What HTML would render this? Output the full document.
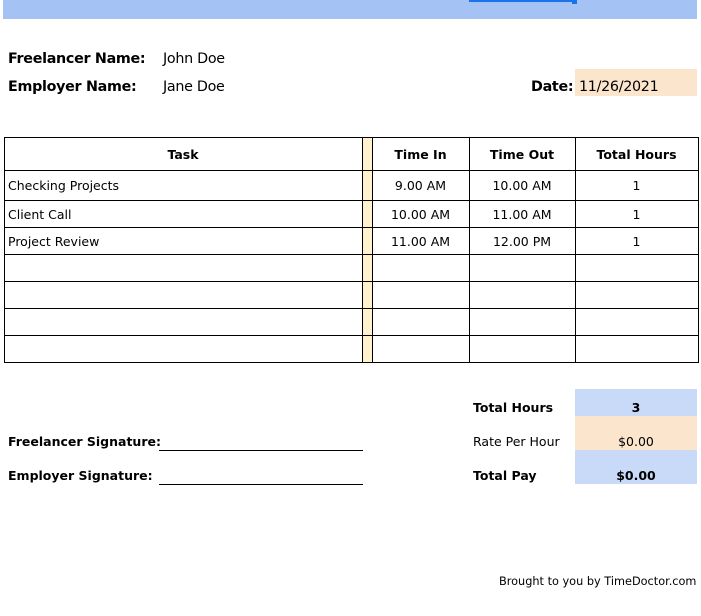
<!DOCTYPE html>
<html><head><style>
body{margin:0;width:701px;height:616px;background:#fff;position:relative;font-family:"DejaVu Sans",Verdana,sans-serif;color:#000;overflow:hidden}
.a{position:absolute;white-space:nowrap}
.b{font-weight:bold}
.l{font-size:14.3px;letter-spacing:-0.3px}
.s{font-size:12.5px}
.c{position:absolute;text-align:center;font-size:12.5px}
.hl{position:absolute;background:#000;height:1px}
.vl{position:absolute;background:#000;width:1px}
</style></head><body>
<div class="a" style="left:3px;top:0;width:694px;height:19px;background:#a4c2f4"></div>
<div class="a" style="left:469px;top:0;width:108px;height:2px;background:#1a73e8"></div>
<div class="a" style="left:572px;top:0;width:5px;height:4px;background:#1a73e8"></div>

<div class="a b l" style="left:8px;top:51px">Freelancer Name:</div>
<div class="a l" style="left:163px;top:51px">John Doe</div>
<div class="a b l" style="left:8px;top:79px">Employer Name:</div>
<div class="a l" style="left:163px;top:79px">Jane Doe</div>
<div class="a" style="left:575px;top:69px;width:122px;height:27px;background:#fce5cd"></div>
<div class="a b l" style="left:531px;top:79px">Date:</div>
<div class="a l" style="left:579px;top:79px">11/26/2021</div>

<div class="a" style="left:362px;top:137px;width:10px;height:225px;background:#fff2cc"></div>
<div class="hl" style="left:4px;width:695px;top:137px"></div>
<div class="hl" style="left:4px;width:695px;top:170px"></div>
<div class="hl" style="left:4px;width:695px;top:200px"></div>
<div class="hl" style="left:4px;width:695px;top:227px"></div>
<div class="hl" style="left:4px;width:695px;top:254px"></div>
<div class="hl" style="left:4px;width:695px;top:281px"></div>
<div class="hl" style="left:4px;width:695px;top:308px"></div>
<div class="hl" style="left:4px;width:695px;top:335px"></div>
<div class="hl" style="left:4px;width:695px;top:362px"></div>
<div class="vl" style="left:4px;top:137px;height:226px"></div>
<div class="vl" style="left:362px;top:137px;height:226px"></div>
<div class="vl" style="left:372px;top:137px;height:226px"></div>
<div class="vl" style="left:469px;top:137px;height:226px"></div>
<div class="vl" style="left:575px;top:137px;height:226px"></div>
<div class="vl" style="left:698px;top:137px;height:226px"></div>

<div class="c b" style="left:4px;width:358px;top:147px">Task</div>
<div class="c b" style="left:372px;width:97px;top:147px">Time In</div>
<div class="c b" style="left:469px;width:106px;top:147px">Time Out</div>
<div class="c b" style="left:575px;width:123px;top:147px">Total Hours</div>

<div class="a s" style="left:8px;top:178px">Checking Projects</div>
<div class="c" style="left:372px;width:97px;top:178px">9.00 AM</div>
<div class="c" style="left:469px;width:106px;top:178px">10.00 AM</div>
<div class="c" style="left:575px;width:123px;top:178px">1</div>
<div class="a s" style="left:8px;top:207px">Client Call</div>
<div class="c" style="left:372px;width:97px;top:207px">10.00 AM</div>
<div class="c" style="left:469px;width:106px;top:207px">11.00 AM</div>
<div class="c" style="left:575px;width:123px;top:207px">1</div>
<div class="a s" style="left:8px;top:234px">Project Review</div>
<div class="c" style="left:372px;width:97px;top:234px">11.00 AM</div>
<div class="c" style="left:469px;width:106px;top:234px">12.00 PM</div>
<div class="c" style="left:575px;width:123px;top:234px">1</div>

<div class="a" style="left:575px;top:389px;width:122px;height:27px;background:#c9daf8"></div>
<div class="a" style="left:575px;top:416px;width:122px;height:34px;background:#fce5cd"></div>
<div class="a" style="left:575px;top:450px;width:122px;height:34px;background:#c9daf8"></div>
<div class="a b s" style="left:473px;top:400px">Total Hours</div>
<div class="c b" style="left:575px;width:122px;top:400px">3</div>
<div class="a s" style="left:473px;top:434px">Rate Per Hour</div>
<div class="c" style="left:575px;width:122px;top:434px">$0.00</div>
<div class="a b s" style="left:473px;top:468px">Total Pay</div>
<div class="c b" style="left:575px;width:122px;top:468px">$0.00</div>

<div class="a b s" style="left:8px;top:434px">Freelancer Signature:</div>
<div class="hl" style="left:159px;width:204px;top:450px"></div>
<div class="a b s" style="left:8px;top:468px">Employer Signature:</div>
<div class="hl" style="left:159px;width:204px;top:484px"></div>

<div class="a" style="left:499px;top:575px;font-size:11.3px">Brought to you by TimeDoctor.com</div>
</body></html>
